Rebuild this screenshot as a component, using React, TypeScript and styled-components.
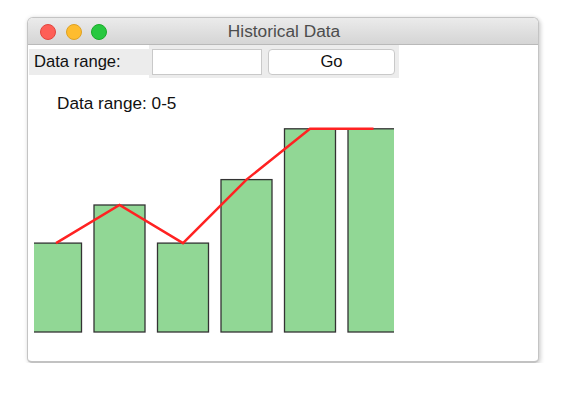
import React from "react";
import styled, { createGlobalStyle } from "styled-components";

const GlobalStyle = createGlobalStyle`
  body {
    margin: 0;
    background: #ffffff;
    font-family: "Liberation Sans", Arial, sans-serif;
  }
`;

const Page = styled.div`
  padding: 17px 0 0 27px;
`;

const Window = styled.div`
  width: 512px;
  height: 346px;
  box-sizing: border-box;
  display: flex;
  flex-flow: column nowrap;
  background: #ffffff;
  border: 1px solid #c4c4c4;
  border-bottom: 2px solid #c2c2c2;
  border-radius: 6px 6px 5px 5px;
  box-shadow: 2px 2px 4px rgba(0, 0, 0, 0.14), 0 0 4px rgba(0, 0, 0, 0.1);
  overflow: hidden;
`;

const TitleBar = styled.div`
  position: relative;
  height: 26px;
  flex: none;
  display: flex;
  align-items: center;
  justify-content: center;
  background: linear-gradient(#ebebeb, #d5d5d5);
  border-bottom: 1px solid #b9b9b9;
`;

const Lights = styled.div`
  position: absolute;
  left: 12px;
  top: 6px;
  display: flex;
  gap: 9.5px;
`;

const Light = styled.span<{ $colour: string; $edge: string }>`
  width: 16px;
  height: 16px;
  border-radius: 50%;
  box-sizing: border-box;
  background: ${(p) => p.$colour};
  border: 0.5px solid ${(p) => p.$edge};
`;

const Title = styled.span`
  font-size: 17.3px;
  color: #4d4d4d;
  margin-left: 2px;
`;

const Toolbar = styled.div`
  display: flex;
  align-items: flex-start;
  padding-left: 1px;
`;

const Label = styled.div`
  width: 120px;
  height: 26px;
  margin-top: 4px;
  box-sizing: border-box;
  padding-left: 5px;
  background: #ececec;
  font-size: 16.6px;
  line-height: 26px;
  color: #111;
`;

const Controls = styled.div`
  display: flex;
  align-items: center;
  gap: 6px;
  height: 33px;
  padding: 0 4px 0 3px;
  background: #ececec;
`;

const Input = styled.input`
  width: 110px;
  height: 26px;
  box-sizing: border-box;
  border: 1px solid #c9c9c9;
  background: #fff;
  outline: none;
  margin: 0;
  padding: 0 4px;
`;

const GoButton = styled.button`
  width: 127px;
  height: 26px;
  margin: 0;
  border: 1px solid #c9c9c9;
  border-radius: 4px;
  background: #fff;
  font-family: "Liberation Sans", Arial, sans-serif;
  font-size: 16.6px;
  color: #111;
  padding: 0;
`;

const RangeText = styled.div`
  margin: 15px 0 0 29px;
  font-size: 17.2px;
  line-height: 20px;
  color: #111;
`;

const Chart = styled.svg`
  display: block;
  margin: 5px 0 0 6px;
  width: 360px;
  height: 215px;
  overflow: hidden;
`;

const values = [3.5, 5, 3.5, 6, 8, 8];
const UNIT = 25.4;
const BASE = 214;
const BAR_W = 51;
const centre = (i: number) => 22 + 63.5 * i;

export default function App() {
  const points = values
    .map((v, i) => `${centre(i)},${BASE - v * UNIT}`)
    .join(" ");
  return (
    <>
      <GlobalStyle />
      <Page>
        <Window>
          <TitleBar>
            <Lights>
              <Light $colour="#fe5f57" $edge="#e2463f" />
              <Light $colour="#febc2e" $edge="#dea123" />
              <Light $colour="#28c840" $edge="#1aab29" />
            </Lights>
            <Title>Historical Data</Title>
          </TitleBar>
          <Toolbar>
            <Label>Data range:</Label>
            <Controls>
              <Input />
              <GoButton>Go</GoButton>
            </Controls>
          </Toolbar>
          <RangeText>Data range: 0-5</RangeText>
          <Chart viewBox="0 0 360 215">
            {values.map((v, i) => (
              <rect
                key={i}
                x={centre(i) - BAR_W / 2}
                y={BASE - v * UNIT}
                width={BAR_W}
                height={v * UNIT}
                fill="#91d795"
                stroke="#333"
                strokeWidth={1.3}
              />
            ))}
            <polyline
              points={points}
              fill="none"
              stroke="#ff2222"
              strokeWidth={2.5}
            />
          </Chart>
        </Window>
      </Page>
    </>
  );
}
